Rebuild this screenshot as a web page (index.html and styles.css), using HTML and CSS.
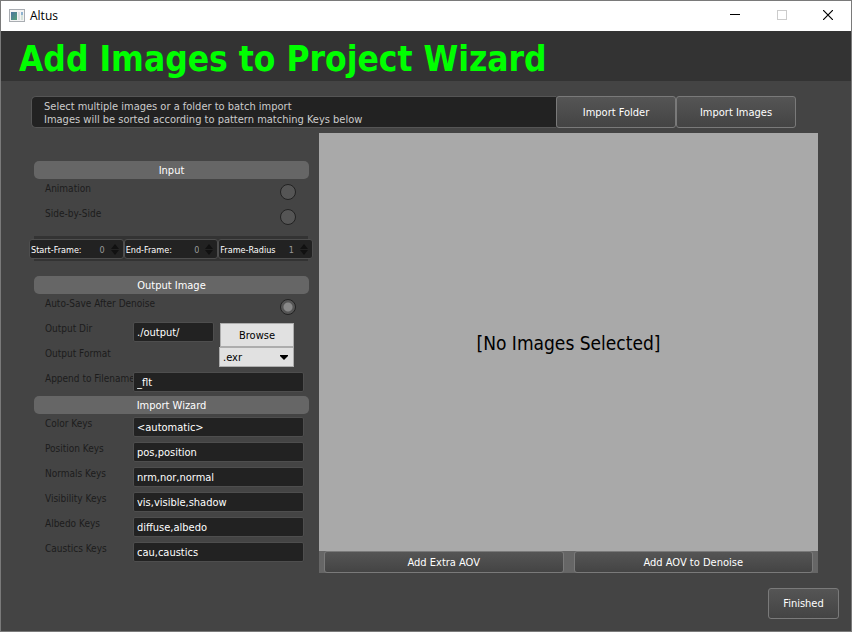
FILE: index.html
```html
<!DOCTYPE html>
<html lang="en">
<head>
<meta charset="utf-8">
<title>Altus</title>
<link rel="stylesheet" href="styles.css">
</head>
<body>
<div class="window">
  <header class="titlebar">
    <svg class="app-icon" width="16" height="14" viewBox="0 0 16 14" aria-hidden="true">
      <defs>
        <linearGradient id="pane" x1="0" y1="0" x2="1" y2="1">
          <stop offset="0" stop-color="#4a74a0"/>
          <stop offset="1" stop-color="#55a077"/>
        </linearGradient>
      </defs>
      <rect x="0.5" y="0.5" width="15" height="12" fill="#f4f4f4" stroke="#a9adb2"/>
      <rect x="2" y="3" width="6" height="8" fill="url(#pane)"/>
      <rect x="9" y="3" width="2" height="8" fill="#dde1e4"/>
      <rect x="12" y="3" width="2" height="3" fill="#8fb3d0"/>
      <rect x="12" y="6" width="2" height="5" fill="#d5e2da"/>
    </svg>
    <span class="app-name">Altus</span>
    <div class="window-controls">
      <button type="button" aria-label="Minimize"><svg width="10" height="10" viewBox="0 0 10 10"><path d="M0 4.5H10" stroke="#000"/></svg></button>
      <button type="button" aria-label="Maximize" disabled><svg width="10" height="10" viewBox="0 0 10 10"><rect x="0.5" y="0.5" width="9" height="9" fill="none" stroke="#ccc"/></svg></button>
      <button type="button" aria-label="Close"><svg width="10" height="10" viewBox="0 0 10 10"><path d="M0 0L10 10M10 0L0 10" stroke="#000" stroke-width="1.2"/></svg></button>
    </div>
  </header>
  <div class="banner"><h1>Add Images to Project Wizard</h1></div>

  <main class="content">
    <div class="import-bar">
      <p class="hint">Select multiple images or a folder to batch import<br>Images will be sorted according to pattern matching Keys below</p>
      <button type="button" class="btn import-btn">Import Folder</button>
      <button type="button" class="btn import-btn">Import Images</button>
    </div>

    <div class="columns">
      <form class="settings">
        <h2>Input</h2>
        <div class="row"><label for="animation">Animation</label><input class="toggle" type="checkbox" id="animation"></div>
        <div class="row"><label for="side">Side-by-Side</label><input class="toggle" type="checkbox" id="side"></div>
        <div class="frames">
          <div class="spin"><label for="start">Start-Frame:</label><input type="number" id="start" value="0"><svg class="arrows" width="8" height="11" viewBox="0 0 8 11"><path d="M0 5L4 0L8 5ZM0 6H8L4 11Z"/></svg></div>
          <div class="spin"><label for="end">End-Frame:</label><input type="number" id="end" value="0"><svg class="arrows" width="8" height="11" viewBox="0 0 8 11"><path d="M0 5L4 0L8 5ZM0 6H8L4 11Z"/></svg></div>
          <div class="spin"><label for="radius">Frame-Radius</label><input type="number" id="radius" value="1"><svg class="arrows" width="8" height="11" viewBox="0 0 8 11"><path d="M0 5L4 0L8 5ZM0 6H8L4 11Z"/></svg></div>
        </div>

        <h2>Output Image</h2>
        <div class="row"><label for="autosave">Auto-Save After Denoise</label><input class="toggle" type="checkbox" id="autosave" checked></div>
        <div class="row"><label for="dir">Output Dir</label><input class="field" type="text" id="dir" value="./output/"><button type="button" class="browse">Browse</button></div>
        <div class="row"><label for="format">Output Format</label>
          <div class="picker"><select id="format"><option>.exr</option></select><svg width="8" height="5" viewBox="0 0 8 5"><path d="M0 0H8V1L4 5L0 1Z"/></svg></div>
        </div>
        <div class="row"><label for="append">Append to Filename</label><input class="field" type="text" id="append" value="_flt"></div>

        <h2>Import Wizard</h2>
        <div class="row"><label for="color">Color Keys</label><input class="field" type="text" id="color" value="&lt;automatic&gt;"></div>
        <div class="row"><label for="position">Position Keys</label><input class="field" type="text" id="position" value="pos,position"></div>
        <div class="row"><label for="normals">Normals Keys</label><input class="field" type="text" id="normals" value="nrm,nor,normal"></div>
        <div class="row"><label for="visibility">Visibility Keys</label><input class="field" type="text" id="visibility" value="vis,visible,shadow"></div>
        <div class="row"><label for="albedo">Albedo Keys</label><input class="field" type="text" id="albedo" value="diffuse,albedo"></div>
        <div class="row"><label for="caustics">Caustics Keys</label><input class="field" type="text" id="caustics" value="cau,caustics"></div>
      </form>

      <section class="preview">
        <div class="empty">[No Images Selected]</div>
        <div class="aov">
          <button type="button" class="btn">Add Extra AOV</button>
          <button type="button" class="btn">Add AOV to Denoise</button>
        </div>
      </section>
    </div>
  </main>

  <footer class="footer"><button type="button" class="btn finish">Finished</button></footer>
</div>
</body>
</html>
```
FILE: styles.css
```css
* {
  box-sizing: border-box;
}

body {
  margin: 0;
  font-family: "DejaVu Sans Condensed", "Noto Sans", sans-serif;
  font-size: 11px;
  line-height: 13px;
  color: #fff;
}

button,
input,
select {
  margin: 0;
  font: inherit;
}

.window {
  display: flex;
  flex-direction: column;
  min-height: 100vh;
  border: 1px solid #7a7a7a;
  background: #444;
}

.titlebar {
  display: flex;
  align-items: center;
  height: 30px;
  padding-left: 8px;
  background: #fff;
}

.app-name {
  margin-left: 5px;
  font-family: "Open Sans", sans-serif;
  font-size: 12px;
  line-height: 16px;
  color: #000;
}

.window-controls {
  display: flex;
  height: 100%;
  margin-left: auto;
}

.window-controls button {
  display: flex;
  align-items: center;
  justify-content: center;
  width: 46px;
  padding: 0 2px 2px 0;
  border: 0;
  background: none;
}

.window-controls button + button {
  padding-right: 0;
}

.banner {
  height: 50px;
  padding-left: 18px;
  background: #333;
}

.banner h1 {
  margin: 0;
  font-family: "DejaVu Sans Condensed", sans-serif;
  font-size: 35px;
  line-height: 56px;
  white-space: nowrap;
  color: #0f0;
}

.content {
  display: flex;
  flex: 1;
  flex-direction: column;
  padding: 15px 33px 0 28px;
}

.import-bar {
  display: flex;
  height: 32px;
  margin: 0 22px 5px 2px;
}

.hint {
  flex: 1;
  margin: 0;
  padding: 3px 12px;
  border: 1px solid #555;
  border-right: 0;
  border-radius: 5px 0 0 5px;
  background: #222;
  color: #ccc;
}

.btn {
  padding: 0;
  border: 1px solid #7a7a7a;
  border-radius: 3px;
  background: linear-gradient(#555, #444);
  color: #fff;
}

.import-btn {
  width: 120px;
}

.columns {
  display: flex;
  flex: 1;
  gap: 5px;
}

.settings {
  width: 285px;
  padding: 28px 5px 0;
}

.settings h2 {
  height: 18px;
  margin: 0;
  border-radius: 5px;
  background: #666;
  font-size: 11px;
  font-weight: normal;
  line-height: 20px;
  text-align: center;
}

.row {
  display: flex;
  align-items: flex-start;
  height: 25px;
  padding: 3px 5px 0 11px;
}

.row label {
  flex: none;
  width: 88px;
  font-size: 10px;
  white-space: nowrap;
  color: #1c1c1c;
}

.row + h2 {
  margin-top: 2px;
}

.toggle {
  appearance: none;
  width: 16px;
  height: 16px;
  margin: 2px 8px 0 auto;
  border: 1px solid #222;
  border-radius: 50%;
  background: #555;
}

.toggle:checked {
  background: radial-gradient(circle, #888 4px, #555 5px);
}

.field {
  flex: 1;
  min-width: 0;
  height: 20px;
  padding: 0 3px;
  border: 1px solid #4e4e4e;
  border-radius: 2px;
  background: #222;
  color: #fff;
}

.browse {
  width: 74px;
  height: 24px;
  margin: 1px 10px 0 6px;
  padding: 0;
  border: 1px solid #adadad;
  background: #e1e1e1;
  color: #000;
}

.picker {
  position: relative;
  width: 75px;
  margin-left: auto;
  margin-right: 10px;
}

.picker select {
  appearance: none;
  display: block;
  width: 100%;
  height: 20px;
  padding: 1px 3px 0;
  border: 1px solid #adadad;
  border-radius: 0;
  background: #e1e1e1;
  color: #000;
}

.picker svg {
  position: absolute;
  top: 8px;
  right: 6px;
  pointer-events: none;
}

.frames {
  display: flex;
  margin: 7px -4px 15px -5px;
  padding: 3px 0 2px;
  background: linear-gradient(#333, #333) center / calc(100% - 10px) 100% no-repeat;
}

.frames .spin {
  display: flex;
  flex: 1;
  align-items: center;
  height: 20px;
  padding: 2px 4px 0 1px;
  border: 1px solid #4e4e4e;
  border-radius: 3px;
  background: #222;
  font-size: 9px;
}

.spin label {
  flex: none;
}

.spin input {
  appearance: textfield;
  flex: 1;
  min-width: 0;
  width: 0;
  padding: 0 6px 0 0;
  border: 0;
  background: none;
  text-align: right;
  color: #999;
}

.spin input::-webkit-inner-spin-button {
  appearance: none;
  margin: 0;
}

.arrows {
  flex: none;
  margin-bottom: 2px;
  fill: #111;
}

.preview {
  display: flex;
  flex: 1;
  flex-direction: column;
}

.empty {
  display: flex;
  flex: 1;
  align-items: center;
  justify-content: center;
  padding-top: 2px;
  background: #a9a9a9;
  font-size: 19px;
  color: #000;
}

.aov {
  display: flex;
  gap: 10px;
  height: 22px;
  padding: 0 5px;
  background: #666;
}

.aov .btn {
  flex: 1;
}

.footer {
  display: flex;
  justify-content: flex-end;
  padding: 15px 12px 12px;
}

.finish {
  width: 71px;
  height: 31px;
}
```
